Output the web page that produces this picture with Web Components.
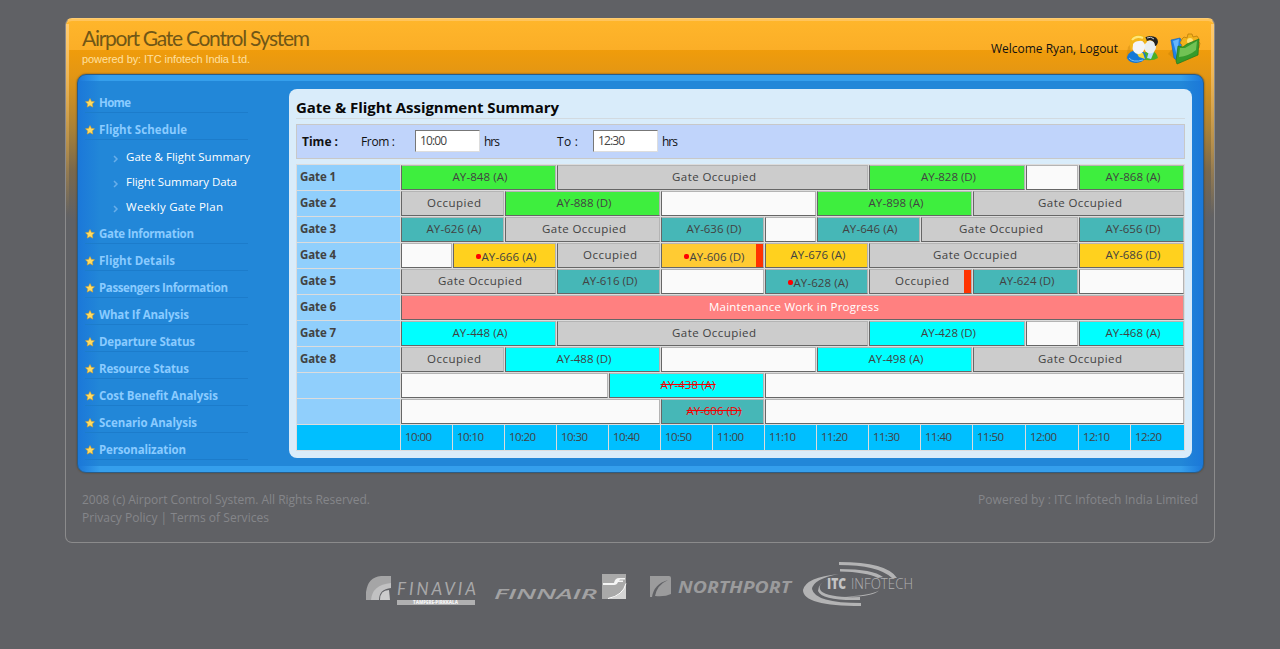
<!DOCTYPE html>
<html lang="en"><head><meta charset="utf-8"><title>Airport Gate Control System</title>
<style>html,body{margin:0;height:100%;overflow:hidden}body{background:#606165;font:12px "Open Sans","Noto Sans",sans-serif}</style></head>
<body><airport-app></airport-app>
<script>
/* Text run whose letter spacing is adjusted so that it spans a given width. */
class FitText extends HTMLElement{
  connectedCallback(){
    const r=this.attachShadow({mode:'open'});
    r.innerHTML='<style>:host{display:inline-block;white-space:pre;text-align:left}span{display:inline-block;white-space:pre}:host([struck]) span{text-decoration:line-through}</style><span><slot></slot></span>';
    const w=+this.getAttribute('w');
    if(w){const s=r.querySelector('span'),n=this.textContent.length;
      this.style.letterSpacing='0px';
      const d=(w-s.getBoundingClientRect().width)/(n-1);
      this.style.letterSpacing=d+'px';this.style.width=w+'px';}
  }
}
customElements.define('fit-text',FitText);

class NavItem extends HTMLElement{
  connectedCallback(){
    const sub=this.hasAttribute('sub');
    this.attachShadow({mode:'open'}).innerHTML=`<style>
    :host{display:flex;align-items:center;box-sizing:border-box;width:163px;margin-left:7px}
    :host(:not([sub])){height:27px;padding-top:8px;border-bottom:1px solid #1c7ccb;color:#8acbff;font-weight:700}
    :host([sub]){height:25px;color:#fff;padding-left:28px;width:180px}
    svg{flex:none;margin-right:4px}:host([sub]) svg{margin:5px 7px 0 0}
    </style>${sub?'<svg width="6" height="8" viewBox="0 0 6 8"><path d="M1 1l3 3-3 3" fill="none" stroke="#68aeea" stroke-width="1.5"/></svg>'
    :'<svg width="10" height="10" viewBox="0 0 10 10"><path d="M5 .6l1.4 2.8 3.1.4-2.3 2.1.6 3.2L5 7.6 2.2 9.1l.6-3.2L.5 3.8l3.1-.4z" fill="#ffdc62" stroke="#e2a92c" stroke-width=".6"/></svg>'}
    <fit-text w="${this.getAttribute('w')}">${this.textContent.replace('&','&amp;')}</fit-text>`;
  }
}
customElements.define('nav-item',NavItem);

class SideNav extends HTMLElement{
  connectedCallback(){
    const items=[['Home',32],['Flight Schedule',88],['Gate &amp; Flight Summary',124,1],['Flight Summary Data',111,1],['Weekly Gate Plan',97,1],['Gate Information',95],['Flight Details',76],['Passengers Information',129],['What If Analysis',90],['Departure Status',96],['Resource Status',90],['Cost Benefit Analysis',119],['Scenario Analysis',98],['Personalization',87]];
    this.attachShadow({mode:'open'}).innerHTML='<style>:host{display:block;padding-top:11px;line-height:16px;font-size:11.5px}.g{padding:4px 0 0;margin-bottom:-2px}</style>'+
    items.map(([t,w,s],i)=>(i==2?'<div class="g">':'')+`<nav-item w="${w}" ${s?'sub':''}>${t}</nav-item>`+(i==4?'</div>':'')).join('');
  }
}
customElements.define('side-nav',SideNav);

class TimeFilter extends HTMLElement{
  connectedCallback(){
    this.attachShadow({mode:'open'}).innerHTML=`<style>
    :host{display:flex;align-items:center;box-sizing:border-box;width:889px;height:35px;border:1px solid #c8c8c8;background:#c0d4fb;padding:0 0 1px 5px;color:#111}
    b{width:59px}.l{width:54px}.h{width:73px;padding-left:4px}.l2{width:36px}
    .i{box-sizing:border-box;width:65px;height:22px;background:#fff;border:1px solid;border-color:#777 #ddd #ddd #777;padding-left:4px;line-height:20px;color:#444}
    </style><b><fit-text w="36">Time :</fit-text></b><span class="l"><fit-text w="34">From :</fit-text></span><span class="i"><fit-text w="27">10:00</fit-text></span><span class="h"><fit-text w="16">hrs</fit-text></span>
    <span class="l2"><fit-text w="21">To :</fit-text></span><span class="i"><fit-text w="27">12:30</fit-text></span><span class="h"><fit-text w="16">hrs</fit-text></span>`;
  }
}
customElements.define('time-filter',TimeFilter);

const X=[401,453,505,557,609,661,713,765,817,869,921,973,1026,1079,1131,1185];
const COL={g:'#3eee3e',o:'#cccccc',t:'#46b7b7',w:'#fafafa',y:'#ffd11e',z:'#ffcb33',c:'#00ffff',r:'#ff8080'};
class GateCell extends HTMLElement{
  connectedCallback(){
    const a=n=>this.getAttribute(n),t=this.textContent;
    const W=a('k')=='r'?170:t=='Gate Occupied'?84:t=='Occupied'?54:55;
    this.attachShadow({mode:'open'}).innerHTML=`<style>
    :host{display:flex;align-items:center;justify-content:center;box-sizing:border-box;flex:none;height:25px;width:${X[a('b')]-X[a('a')]-1}px;padding:0 0 2px 3px;background:${COL[a('k')]};border:1px solid;border-color:#b4b4b4 #b4b4b4 #666 #666;color:${a('k')=='r'?'#fff':'#424242'};position:relative}
    :host([bar])::after{content:"";position:absolute;right:0;top:0;bottom:0;width:7px;background:#ff3300}
    :host([dot]) fit-text{margin-top:3px}
    i{width:5px;height:5px;border-radius:2px;background:red;margin:3px 1px 0 0}
    .s{color:#f00000}
    </style>${this.hasAttribute('dot')?'<i></i>':''}${t?`<fit-text ${this.hasAttribute('off')?'class="s" struck':''} w="${W}">${t}</fit-text>`:''}`;
  }
}
customElements.define('gate-cell',GateCell);

class GateBoard extends HTMLElement{
  connectedCallback(){
    const O='Gate Occupied',P='Occupied';
    const rows=[
    ['Gate 1',[0,3,'g','AY-848 (A)'],[3,9,'o',O],[9,12,'g','AY-828 (D)'],[12,13,'w',''],[13,15,'g','AY-868 (A)']],
    ['Gate 2',[0,2,'o',P],[2,5,'g','AY-888 (D)'],[5,8,'w',''],[8,11,'g','AY-898 (A)'],[11,15,'o',O]],
    ['Gate 3',[0,2,'t','AY-626 (A)'],[2,5,'o',O],[5,7,'t','AY-636 (D)'],[7,8,'w',''],[8,10,'t','AY-646 (A)'],[10,13,'o',O],[13,15,'t','AY-656 (D)']],
    ['Gate 4',[0,1,'w',''],[1,3,'y','AY-666 (A)','dot'],[3,5,'o',P],[5,7,'z','AY-606 (D)','dot bar'],[7,9,'y','AY-676 (A)'],[9,13,'o',O],[13,15,'y','AY-686 (D)']],
    ['Gate 5',[0,3,'o',O],[3,5,'t','AY-616 (D)'],[5,7,'w',''],[7,9,'t','AY-628 (A)','dot'],[9,11,'o',P,'bar'],[11,13,'t','AY-624 (D)'],[13,15,'w','']],
    ['Gate 6',[0,15,'r','Maintenance Work in Progress']],
    ['Gate 7',[0,3,'c','AY-448 (A)'],[3,9,'o',O],[9,12,'c','AY-428 (D)'],[12,13,'w',''],[13,15,'c','AY-468 (A)']],
    ['Gate 8',[0,2,'o',P],[2,5,'c','AY-488 (D)'],[5,8,'w',''],[8,11,'c','AY-498 (A)'],[11,15,'o',O]],
    ['',[0,4,'w',''],[4,7,'c','AY-438 (A)','off'],[7,15,'w','']],
    ['',[0,5,'w',''],[5,7,'t','AY-606 (D)','off'],[7,15,'w','']]];
    const times=['10:00','10:10','10:20','10:30','10:40','10:50','11:00','11:10','11:20','11:30','11:40','11:50','12:00','12:10','12:20'];
    this.attachShadow({mode:'open'}).innerHTML=`<style>
    :host{display:flex;flex-direction:column;gap:1px;padding:1px;box-sizing:border-box;width:889px;background:#dcdcdc;color:#424242;font-size:11.5px}
    .r{display:flex;gap:1px;height:25px}.n{width:103px;flex:none;box-sizing:border-box;padding-left:3px;background:#90cffc;font-weight:700;line-height:24px}
    .t .n,.t div{background:#00bfff}.t div{line-height:24px;box-sizing:border-box;padding-left:4px}
    </style>`+rows.map(([n,...c])=>`<div class="r"><div class="n">${n?`<fit-text w="36">${n}</fit-text>`:''}</div>${c.map(([a,b,k,t,f])=>`<gate-cell a="${a}" b="${b}" k="${k}" ${f||''}>${t}</gate-cell>`).join('')}</div>`).join('')+
    `<div class="r t"><div class="n"></div>${times.map((t,i)=>`<div style="width:${X[i+1]-X[i]-1}px"><fit-text w="27">${t}</fit-text></div>`).join('')}</div>`;
  }
}
customElements.define('gate-board',GateBoard);

class HeaderBar extends HTMLElement{
  connectedCallback(){
    this.attachShadow({mode:'open'}).innerHTML=`<style>
    :host{display:flex;justify-content:space-between;height:56px;box-sizing:border-box;padding:5px 12px 0 16px}
    .t{display:block;font:21px/28px Lato,"Open Sans",sans-serif;color:#715716}.p{display:block;font:11px/14px "Liberation Sans",sans-serif;color:#ffe0a0}
    .u{display:flex;align-items:center;color:#111;height:50px}.u svg{flex:none}.u fit-text{margin-top:-1px}
    </style><div><fit-text class="t" w="228">Airport Gate Control System</fit-text><fit-text class="p" w="168">powered by: ITC infotech India Ltd.</fit-text></div>
    <div class="u"><fit-text w="127">Welcome Ryan, Logout</fit-text>
    <svg style="margin-left:7px" width="34" height="32" viewBox="0 0 34 32">
      <path d="M1 26L3 14l7-8v18z" fill="#b87800" opacity=".3"/>
      <path d="M16 26q2-8 9-9 7 2 8 8-6 4-17 1" fill="#4cae26"/><path d="M24 18l5 1-3 7-4-1z" fill="#aedcff"/>
      <ellipse cx="25" cy="14" rx="6" ry="6.5" fill="#e9eef0"/><path d="M18 10q-1-6 7-7 8 0 8 6-1 4-3 4 0-5-5-6-5 1-7 3" fill="#222"/><path d="M22 5q4-2 7 1" stroke="#ccc" fill="none"/>
      <path d="M2 24q2-7 12-7 7 1 7 8-6 7-15 4-4-2-4-5" fill="#1578d6"/><path d="M11 19l7 1 2 6-6-2z" fill="#f5d634"/><path d="M4 25q4 5 14 2" stroke="#79c2ff" fill="none"/>
      <ellipse cx="13.5" cy="13.5" rx="6.5" ry="7.5" fill="#f4f5f6"/><path d="M6 18Q2 4 11 2q10-2 11 7l-2 2q-2-4-6-3-4 0-6 3 0 5-2 7" fill="#f3b719"/><path d="M7 7q4-5 11-2" stroke="#ffe67a" stroke-width="2" fill="none"/>
    </svg>
    <svg style="margin-left:9px" width="34" height="34" viewBox="0 0 34 34">
      <path d="M0 22l5-6 5 14z" fill="#b87800" opacity=".35"/><path d="M3 8l9-2 3 5-3 20-6-5z" fill="#1e83e8" stroke="#0b5fbd" stroke-width=".6"/><path d="M5 9l6-2-2 17z" fill="#66b5fa"/>
      <path d="M14 7l2-2 3 1 1-4h4l1 3 4-1 2 3-2 2 3 2-1 5-15 3-3-4 1-2-2-2z" fill="#f2b21a" stroke="#b4770a" stroke-width=".7"/><circle cx="22" cy="9" r="3" fill="#ffe178"/>
      <path d="M10 14l5 1 4-3 12-5-1 16-21 9-1-3z" fill="#369b2b" stroke="#24771d" stroke-width=".7"/><path d="M12 16l5 0 12-7-1 9q-7 6-17 7z" fill="#85cf63" opacity=".75"/>
    </svg></div>`;
  }
}
customElements.define('header-bar',HeaderBar);

class PartnerLogos extends HTMLElement{
  connectedCallback(){
    this.attachShadow({mode:'open'}).innerHTML=`<style>:host{display:block;padding:17px 0 0 365px}svg{display:block}text{font-family:"Open Sans",sans-serif}</style>
    <svg width="555" height="50" viewBox="365 560 555 50">
    <path d="M366 600v-8q2-15 15-16h10v8q-14 0-15 16z" fill="#a5a5a6"/><path d="M371 600q1-15 20-17v5q-12 1-12 12z" fill="#c1c1c2"/><path d="M380 600q0-10 9-10l1 10z" fill="#ccc"/>
    <text x="397" y="595" font-size="17" font-family="Lato" font-style="italic" textLength="79" fill="#a8a8a9" style="font-family:Lato">FINAVIA</text><path d="M397 600h78v5h-78z" fill="#b0b0b1"/><text x="413" y="604.3" font-size="4.5" font-weight="800" textLength="45" fill="#f4f4f4">TAMPERE-PIRKKALA</text>
    <text x="494" y="599" font-size="15" font-weight="600" font-style="italic" textLength="103" lengthAdjust="spacingAndGlyphs" fill="#a2a2a3">FINNAIR</text>
    <path d="M602 574h24v25h-24z" fill="#a9a9a9"/><path d="M603 583h11q1-5 5-5h6v1.500h-5l-1 1h4v1.500h-5q-1 3-4 3h-11z" fill="#f5f5f5"/><path d="M608 599q15-3 18-16v16z" fill="#d5d5d5"/><path d="M608 598.500q15-3 18-15" stroke="#fff" fill="none"/>
    <path d="M650 576h19q2 0 2 2v16q-6 3-16 2 2-11 13-16-14 4-16 17h-2z" fill="#9b9b9c"/>
    <text x="678" y="592.500" font-size="15.500" font-weight="700" font-style="italic" textLength="113" lengthAdjust="spacingAndGlyphs" fill="#9b9b9c">NORTHPORT</text>
    <g fill="#b3b3b4"><path d="M839 562q48 0 58 16h-5q-14-13-53-13z"/><path d="M840 569q33 0 43 8l-5 1q-12-6-38-6.500z"/><path d="M839 574q-26 5-27 15 3 14 49 14v3q-58 0-58-16 3-13 36-16z"/><path d="M830 578q-14 6-9 13 8 7 39 6v3q-38 1-42-9 0-8 12-13"/><path d="M845 596.500q25-1 34-6-8 7-34 6z"/></g>
    <text x="827" y="589" font-size="15" font-weight="800" textLength="19" lengthAdjust="spacingAndGlyphs" fill="#c4c4c4">ITC</text><text x="851" y="589" font-size="14" font-weight="300" textLength="62" lengthAdjust="spacingAndGlyphs" fill="#b0b0b1">INFOTECH</text>
    </svg>`;
  }
}
customElements.define('partner-logos',PartnerLogos);

class AirportApp extends HTMLElement{
  connectedCallback(){
    this.attachShadow({mode:'open'}).innerHTML=`<style>
    :host{display:block;padding-top:18px;height:649px;box-sizing:border-box;background:#606165}
    .f{box-sizing:border-box;width:1150px;height:525px;margin-left:65px;border-radius:7px;border:1px solid #8b8b8c;border-top-color:#ffcc70;background:linear-gradient(#ffb62b 0,#fbae27 31px,#f09c0b 31px,#e39614 56px,#a98136 110px,#78684d 152px,#606165 200px);box-shadow:inset 0 3px 0 -1px #ffc45b}
    .f{position:relative}.f::before,.f::after{content:"";position:absolute;top:5px;width:3px;height:190px;background:linear-gradient(#ffcb70,#d4a75b99 55%,#8b8b8c00)}.f::before{left:0}.f::after{right:0}
    .b{box-sizing:border-box;display:flex;width:1127px;height:399px;margin-left:11px;margin-top:-1px;border-radius:9px;background:linear-gradient(90deg,#1b78d9,#1b78d900 22px 1103px,#1b78d9),linear-gradient(#359fec 0 6px,#2287d8 6px 391px,#359fec 391px);border:1px solid #295c88;box-shadow:0 0 2px #5b411b}
    side-nav{width:210px;flex:none}
    .m{box-sizing:border-box;width:903px;height:369px;margin:14px 0 0 1px;border-radius:8px;background:#d9ecfa;padding:0 7px}
    h1{margin:0 0 5px;width:889px;height:30px;line-height:37px;font-size:15px;font-weight:700;color:#080808;border-bottom:1px solid #d2dae0;box-sizing:border-box}
    gate-board{margin-top:5px}
    .d{display:flex;justify-content:space-between;padding:18px 16px 0;line-height:18px;color:#85868a}
    .d fit-text{display:block}
    </style><div class="f"><header-bar></header-bar><div class="b"><side-nav></side-nav><div class="m"><h1><fit-text w="263">Gate &amp; Flight Assignment Summary</fit-text></h1><time-filter></time-filter><gate-board></gate-board></div></div>
    <div class="d"><div><fit-text w="288">2008 (c) Airport Control System. All Rights Reserved.</fit-text><fit-text w="187">Privacy Policy | Terms of Services</fit-text></div><fit-text w="220">Powered by : ITC Infotech India Limited</fit-text></div></div><partner-logos></partner-logos>`;
  }
}
customElements.define('airport-app',AirportApp);
</script></body></html>
